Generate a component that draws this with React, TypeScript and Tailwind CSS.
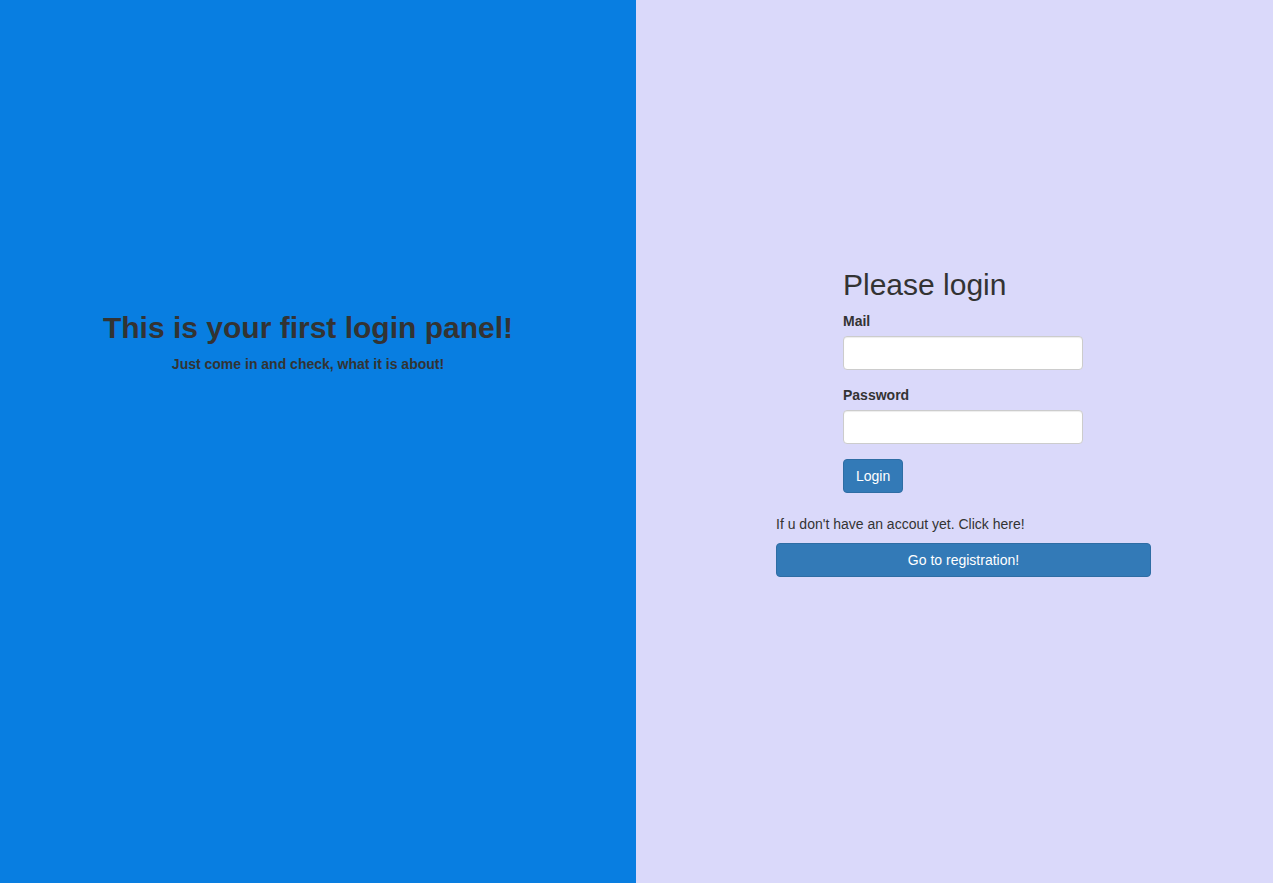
import React from "react";

const App: React.FC = () => {
  return (
    <div
      className="flex h-[883px] w-full text-[14px] text-[#333]"
      style={{ fontFamily: '"Liberation Sans", Arial, sans-serif' }}
    >
      {/* left intro panel */}
      <div className="w-[636px] shrink-0 bg-[#087ee1] pt-[311px] pr-[20px] text-center">
        <h2 className="text-[30px] font-bold leading-[33px]">
          This is your first login panel!
        </h2>
        <h5 className="mt-[13px] text-[14px] font-bold leading-[15px]">
          Just come in and check, what it is about!
        </h5>
      </div>

      {/* right login panel */}
      <div className="flex-1 bg-[#dad9fa] pt-[268px] pl-[140px]">
        <div className="ml-[67px] w-[240px]">
          <h1 className="mb-[10px] text-[30px] font-normal leading-[33px]">
            Please login
          </h1>
          <div className="mb-[15px]">
            <label className="mb-[5px] block font-bold leading-[20px]">Mail</label>
            <input
              type="email"
              className="block h-[34px] w-full rounded-[4px] border border-[#ccc] bg-white px-3 shadow-[inset_0_1px_1px_rgba(0,0,0,0.075)] outline-none"
            />
          </div>
          <div className="mb-[15px]">
            <label className="mb-[5px] block font-bold leading-[20px]">Password</label>
            <input
              type="password"
              className="block h-[34px] w-full rounded-[4px] border border-[#ccc] bg-white px-3 shadow-[inset_0_1px_1px_rgba(0,0,0,0.075)] outline-none"
            />
          </div>
          <button className="h-[34px] rounded-[4px] border border-[#2e6da4] bg-[#337ab7] px-[12px] leading-[20px] text-white">
            Login
          </button>
        </div>

        <p className="mt-[21px] mb-[9px] leading-[20px]">
          If u don't have an accout yet. Click here!
        </p>
        <button className="h-[34px] w-[375px] rounded-[4px] border border-[#2e6da4] bg-[#337ab7] leading-[20px] text-white">
          Go to registration!
        </button>
      </div>
    </div>
  );
};

export default App;
